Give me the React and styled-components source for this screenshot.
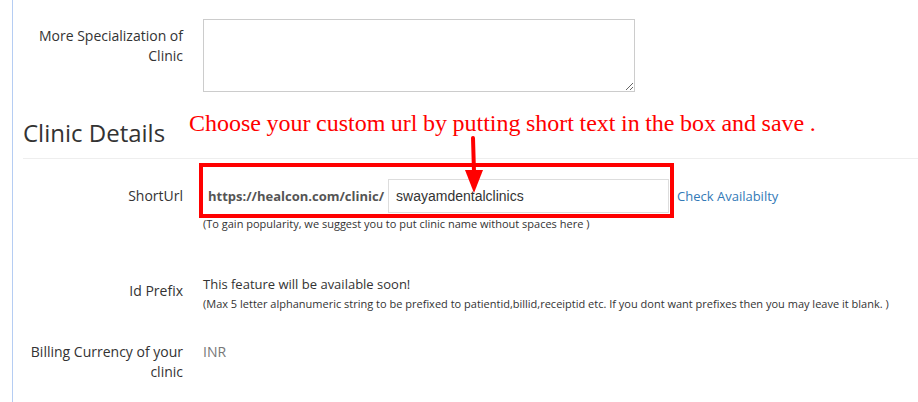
import React from "react";
import styled, { createGlobalStyle } from "styled-components";

const Global = createGlobalStyle`
  html, body { margin: 0; padding: 0; background: #fff; }
  body {
    font-family: "Open Sans", "Liberation Sans", sans-serif;
    color: #333;
    font-size: 14px;
  }
  * { box-sizing: border-box; }
`;

const Page = styled.div`
  position: relative;
  width: 918px;
  height: 402px;
  overflow: hidden;
`;

const Panel = styled.div`
  margin-left: 12px;
  border-left: 1px solid #b5cdf3;
  padding-left: 10px;
  height: 100%;
  display: flex;
  flex-direction: column;
`;

const Row = styled.div`
  display: grid;
  grid-template-columns: 160px 1fr;
  column-gap: 20px;
  margin-top: ${(p) => p.$top}px;
`;

const Label = styled.div`
  text-align: right;
  padding-top: 7px;
  font-size: 14px;
  line-height: 20px;
  color: #333;
`;

const TextArea = styled.textarea`
  width: 432px;
  height: 73px;
  border: 1px solid #ccc;
  border-radius: 0;
  font-family: inherit;
  font-size: 14px;
  padding: 6px 12px;
  margin: 0;
  display: block;
`;

const SectionTitle = styled.h3`
  margin: 28px 0 0 0;
  font-size: 24px;
  line-height: 26px;
  font-weight: 400;
  color: #333;
  padding-bottom: 12px;
  border-bottom: 1px solid #eee;
`;

const Control = styled.div`
  display: flex;
  flex-direction: column;
`;

const UrlLine = styled.div`
  display: flex;
  align-items: center;
  height: 34px;
`;

const Prefix = styled.span`
  font-weight: 700;
  font-size: 13px;
  color: #555;
  padding-left: 5px;
  margin-right: 4px;
  white-space: nowrap;
`;

const SlugInput = styled.input`
  width: 281px;
  height: 34px;
  border: 1px solid #ddd;
  border-radius: 0;
  padding: 0 7px;
  font-family: "Liberation Sans", Arial, sans-serif;
  font-size: 14px;
  color: #333;
  margin: 0;
`;

const CheckLink = styled.a`
  margin-left: 8px;
  font-size: 13px;
  color: #337ab7;
  text-decoration: none;
  white-space: nowrap;
`;

const Help = styled.div`
  font-size: 11px;
  line-height: 16px;
  color: #333;
  margin-top: ${(p) => p.$top ?? 0}px;
  white-space: nowrap;
`;

const Notice = styled.div`
  font-size: 13px;
  line-height: 20px;
  color: #333;
`;

const StaticValue = styled.div`
  padding-top: 7px;
  font-size: 14px;
  line-height: 20px;
  color: #777;
`;

/* Annotation layer drawn over the form */
const Callout = styled.div`
  position: absolute;
  left: 189px;
  top: 110px;
  font-family: "Liberation Serif", "Times New Roman", serif;
  font-size: 24px;
  word-spacing: -0.5px;
  color: #f00;
  white-space: nowrap;
`;

const Highlight = styled.div`
  position: absolute;
  left: 199px;
  top: 163px;
  width: 475px;
  height: 55px;
  border: 4px solid #f00;
`;

const Pointer = styled.svg`
  position: absolute;
  left: 462px;
  top: 136px;
`;

export default function App() {
  return (
    <Page>
      <Global />
      <Panel>
        <Row $top={19}>
          <Label>More Specialization of Clinic</Label>
          <TextArea />
        </Row>

        <SectionTitle>Clinic Details</SectionTitle>

        <Row $top={20}>
          <Label>ShortUrl</Label>
          <Control>
            <UrlLine>
              <Prefix>https://healcon.com/clinic/</Prefix>
              <SlugInput defaultValue="swayamdentalclinics" />
              <CheckLink href="#">Check Availabilty</CheckLink>
            </UrlLine>
            <Help $top={3}>
              (To gain popularity, we suggest you to put clinic name without spaces here )
            </Help>
          </Control>
        </Row>

        <Row $top={42}>
          <Label>Id Prefix</Label>
          <Control>
            <Notice>This feature will be available soon!</Notice>
            <Help $top={2}>
              (Max 5 letter alphanumeric string to be prefixed to patientid,billid,receiptid etc. If you dont want prefixes then you may leave it blank. )
            </Help>
          </Control>
        </Row>

        <Row $top={23}>
          <Label>Billing Currency of your clinic</Label>
          <StaticValue>INR</StaticValue>
        </Row>
      </Panel>

      <Callout>Choose your custom url by putting short text in the box and save .</Callout>
      <Highlight />
      <Pointer width="24" height="60" viewBox="0 0 24 60">
        <path d="M11 2 L12 36" stroke="#f00" strokeWidth="4" strokeLinecap="round" fill="none" />
        <polygon points="3,34 21,34 12,57" fill="#f00" />
      </Pointer>
    </Page>
  );
}
